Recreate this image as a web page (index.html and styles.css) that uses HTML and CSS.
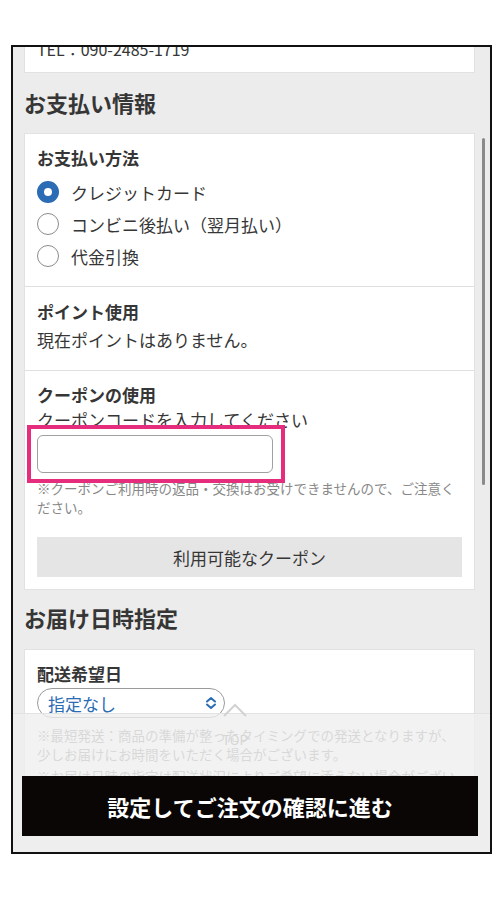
FILE: index.html
```html
<!doctype html>
<html lang="ja">
  <head>
    <meta charset="utf-8">
    <meta name="viewport" content="width=device-width, initial-scale=1.0">
    <title>ご注文手続き</title>
    <link rel="stylesheet" href="styles.css">
  </head>
  <body>
    <div class="phone">

      <!-- scrolled page content -->
      <div class="screen">

        <div class="card card-top">
          <p class="tel">TEL：090-2485-1719</p>
        </div>

        <h2 class="sec-title">お支払い情報</h2>
        <div class="card">
          <div class="block block-pay">
            <h3 class="label">お支払い方法</h3>
            <ul class="radios">
              <li class="radio-row"><span class="radio is-on"></span>クレジットカード</li>
              <li class="radio-row"><span class="radio"></span>コンビニ後払い（翌月払い）</li>
              <li class="radio-row"><span class="radio"></span>代金引換</li>
            </ul>
          </div>

          <div class="block block-point">
            <h3 class="label">ポイント使用</h3>
            <p class="text">現在ポイントはありません。</p>
          </div>

          <div class="block block-coupon">
            <h3 class="label">クーポンの使用</h3>
            <p class="text prompt">クーポンコードを入力してください</p>
            <div class="input-wrap">
              <input class="coupon-input" type="text">
              <span class="mark"></span>
            </div>
            <p class="note">※クーポンご利用時の返品・交換はお受けできませんので、ご注意ください。</p>
            <button class="coupon-btn">利用可能なクーポン</button>
          </div>
        </div>

        <h2 class="sec-title">お届け日時指定</h2>
        <div class="card">
          <div class="block block-date">
            <h3 class="label">配送希望日</h3>
            <div class="select">
              <span>指定なし</span>
              <svg width="12" height="14" viewBox="0 0 12 14"><path d="M2 5.5 L6 2 L10 5.5 M2 8.5 L6 12 L10 8.5" fill="none" stroke="#2b6cb5" stroke-width="2" stroke-linecap="round" stroke-linejoin="round"/></svg>
            </div>
            <p class="note note-date">※最短発送：商品の準備が整ったタイミングでの発送となりますが、少しお届けにお時間をいただく場合がございます。</p>
            <p class="note note-last">※お届け日時の指定は配送状況によりご希望に添えない場合がございます。</p>
          </div>
        </div>

      </div>

      <div class="scrollbar"></div>

      <!-- fixed footer over the content -->
      <div class="footer">
        <button class="submit">設定してご注文の確認に進む</button>
      </div>

      <div class="to-top">
        <svg width="26" height="16" viewBox="0 0 26 16"><polyline points="2,14 13,3 24,14" fill="none" stroke="#d2d2d2" stroke-width="2"/></svg>
        <span>TOP</span>
      </div>

    </div>
  </body>
</html>
```

FILE: styles.css
```css
body {
  margin: 0;
  background-color: white;
  font-family: "Noto Sans CJK JP", "Noto Sans", sans-serif;
  color: #363636;
}

.phone {
  position: relative;
  width: 477px;
  height: 805px;
  margin: 45px 0 0 11px;
  border: 2px solid #111;
  background-color: #ececec;
  overflow: hidden;
}

.screen {
  margin-top: -25px;
  padding: 0 15px 0 11px;
}

p, h2, h3, ul {
  margin: 0;
  padding: 0;
}

.card {
  background-color: white;
  border: 1px solid #e2e2e2;
}
.card-top {
  padding: 14px 12px 11px;
}
.tel {
  font-size: 16px;
  line-height: 24px;
}

.sec-title {
  font-size: 22px;
  font-weight: 700;
  line-height: 28px;
  margin: 15px 0 17px;
}
.sec-title + .card + .sec-title {
  margin-top: 13px;
  margin-bottom: 18px;
}

.block {
  padding: 12px 12px 14px;
}
.block + .block {
  border-top: 1px solid #e0e0e0;
}
.label {
  font-size: 17px;
  font-weight: 700;
  line-height: 24px;
}
.text {
  font-size: 17px;
  line-height: 24px;
}

/* payment method */
.radios {
  list-style: none;
  margin-top: 6px;
}
.radio-row {
  display: flex;
  align-items: center;
  gap: 12px;
  height: 32px;
  font-size: 17px;
}
.radio {
  box-sizing: border-box;
  width: 22px;
  height: 22px;
  border: 1.5px solid #8c8c8c;
  border-radius: 50%;
  flex-shrink: 0;
}
.radio.is-on {
  border: 7px solid #2b6cb5;
  background-color: white;
}

/* points */
.block-point {
  padding: 13px 12px 18px;
}
.block-point .text {
  margin-top: 4px;
}

/* coupon */
.block-coupon {
  padding: 12px 12px 12px;
}
.prompt {
  margin-top: 1px;
}
.input-wrap {
  position: relative;
  width: 236px;
  margin-top: 3px;
}
.coupon-input {
  display: block;
  box-sizing: border-box;
  width: 236px;
  height: 38px;
  border: 1px solid #a0a0a0;
  border-radius: 6px;
  background-color: white;
}
.mark {
  position: absolute;
  left: -10px;
  top: -10px;
  right: -12px;
  bottom: -10px;
  border: 4.5px solid #e62d7d;
}
.note {
  font-size: 13.5px;
  line-height: 19px;
  color: #888;
}
.block-coupon .note {
  margin-top: 6px;
}
.coupon-btn {
  display: block;
  width: 100%;
  height: 40px;
  margin-top: 20px;
  border: none;
  background-color: #e5e5e5;
  font-family: inherit;
  font-size: 17px;
  color: #363636;
}

/* delivery date */
.select {
  box-sizing: border-box;
  display: flex;
  align-items: center;
  justify-content: space-between;
  width: 188px;
  height: 30px;
  margin-top: 2px;
  padding: 0 7px 0 10px;
  border: 1px solid #9a9a9a;
  border-radius: 15px;
  font-size: 17px;
  color: #2b6cb5;
}
.select svg {
  display: block;
}
.note-date {
  margin-top: 8px;
}
.note-last {
  margin-top: 3px;
}

.scrollbar {
  position: absolute;
  right: 5px;
  top: 91px;
  width: 3px;
  height: 347px;
  border-radius: 2px;
  background-color: #8a8a8a;
}

.footer {
  position: absolute;
  left: 0;
  right: 0;
  bottom: 0;
  height: 139px;
  box-sizing: border-box;
  padding: 62px 12px 17px 9px;
  border-top: 1px solid #e2e2e2;
  background-color: rgba(238, 238, 238, 0.78);
}
.submit {
  display: block;
  width: 100%;
  height: 60px;
  border: none;
  background-color: #0a0606;
  color: white;
  font-family: inherit;
  font-size: 22px;
  font-weight: 700;
}

.to-top {
  position: absolute;
  left: 207px;
  top: 655px;
  width: 30px;
  display: flex;
  flex-direction: column;
  align-items: center;
  font-size: 13px;
  line-height: 14px;
  color: #d6d6d6;
}
.to-top svg {
  display: block;
}
.to-top span {
  margin-top: 15px;
}
```
